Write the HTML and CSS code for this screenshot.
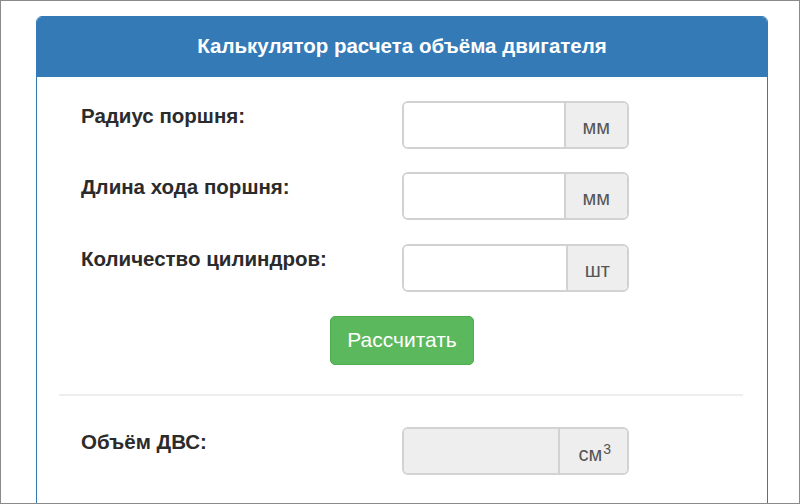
FILE: index.html
```html
<!DOCTYPE html>
<html lang="ru">
<head>
<meta charset="utf-8">
<title>Калькулятор расчета объёма двигателя</title>
<link rel="stylesheet" href="styles.css">
</head>
<body>
<div class="frame">
  <div class="panel">
    <div class="panel-heading">Калькулятор расчета объёма двигателя</div>
    <div class="panel-body">
      <div class="row">
        <label class="label">Радиус поршня:</label>
        <div class="input-group">
          <input class="control" type="text">
          <span class="addon">мм</span>
        </div>
      </div>
      <div class="row">
        <label class="label">Длина хода поршня:</label>
        <div class="input-group">
          <input class="control" type="text">
          <span class="addon">мм</span>
        </div>
      </div>
      <div class="row row-third">
        <label class="label">Количество цилиндров:</label>
        <div class="input-group">
          <input class="control" type="text">
          <span class="addon">шт</span>
        </div>
      </div>
      <div class="actions">
        <button class="btn" type="button">Рассчитать</button>
      </div>
      <hr class="divider">
      <div class="row">
        <label class="label">Объём ДВС:</label>
        <div class="input-group">
          <input class="control control-disabled" type="text" disabled>
          <span class="addon addon-narrow">см<sup>3</sup></span>
        </div>
      </div>
    </div>
  </div>
</div>
</body>
</html>
```

FILE: styles.css
```css
* { box-sizing: border-box; }
html, body { margin: 0; padding: 0; background: #fff; }
body { font-family: "Liberation Sans", Arial, sans-serif; color: #333; }

.frame {
  width: 800px;
  height: 504px;
  border: 1px solid #8a8a8a;
  padding: 15px 0 0 35px;
  overflow: hidden;
}

.panel {
  width: 732px;
  border: 1px solid #337ab7;
  border-radius: 6px 6px 0 0;
  height: 520px;
}

.panel-heading {
  background: #337ab7;
  color: #fff;
  font-weight: bold;
  font-size: 20.5px;
  height: 60px;
  display: flex;
  align-items: center;
  justify-content: center;
  border-radius: 5px 5px 0 0;
  padding-bottom: 2px;
}

.panel-body {
  padding: 24px 22px 0 22px;
}

.row {
  display: flex;
  align-items: flex-start;
  height: 48px;
  margin-bottom: 23px;
  padding-left: 22px;
}

.row-third { margin-top: 24px; }

.label {
  width: 321px;
  font-weight: bold;
  font-size: 20.5px;
  padding-top: 3px;
  line-height: 24px;
  color: #2b2b2b;
}

.input-group {
  display: flex;
  width: 227px;
  height: 48px;
  border: 2px solid #d2d2d2;
  border-radius: 6px;
  overflow: hidden;
}

.control {
  flex: 1;
  min-width: 0;
  border: 0;
  margin: 0;
  padding: 0 12px;
  font: inherit;
  background: #fff;
  outline: none;
}

.control-disabled { background: #eee; }

.addon {
  background: #eee;
  border-left: 2px solid #d2d2d2;
  color: #555;
  font-size: 20px;
  padding: 4px 17px 0 17px;
  display: flex;
  align-items: center;
}

.addon-narrow { padding: 6px 16px 0 18px; }
.addon sup { font-size: 14px; align-self: flex-start; margin-top: 6px; margin-left: 1px; }

.actions {
  display: flex;
  justify-content: center;
  margin-top: 24px;
}

.btn {
  width: 144px;
  height: 49px;
  background: #5cb85c;
  border: 1px solid #4cae4c;
  border-radius: 5px;
  color: #fff;
  font-family: "Liberation Sans", Arial, sans-serif;
  font-size: 21px;
  padding: 0 0 2px 0;
}

.divider {
  border: 0;
  border-top: 2px solid #eee;
  margin: 29px 2px 31px 0;
}
```
